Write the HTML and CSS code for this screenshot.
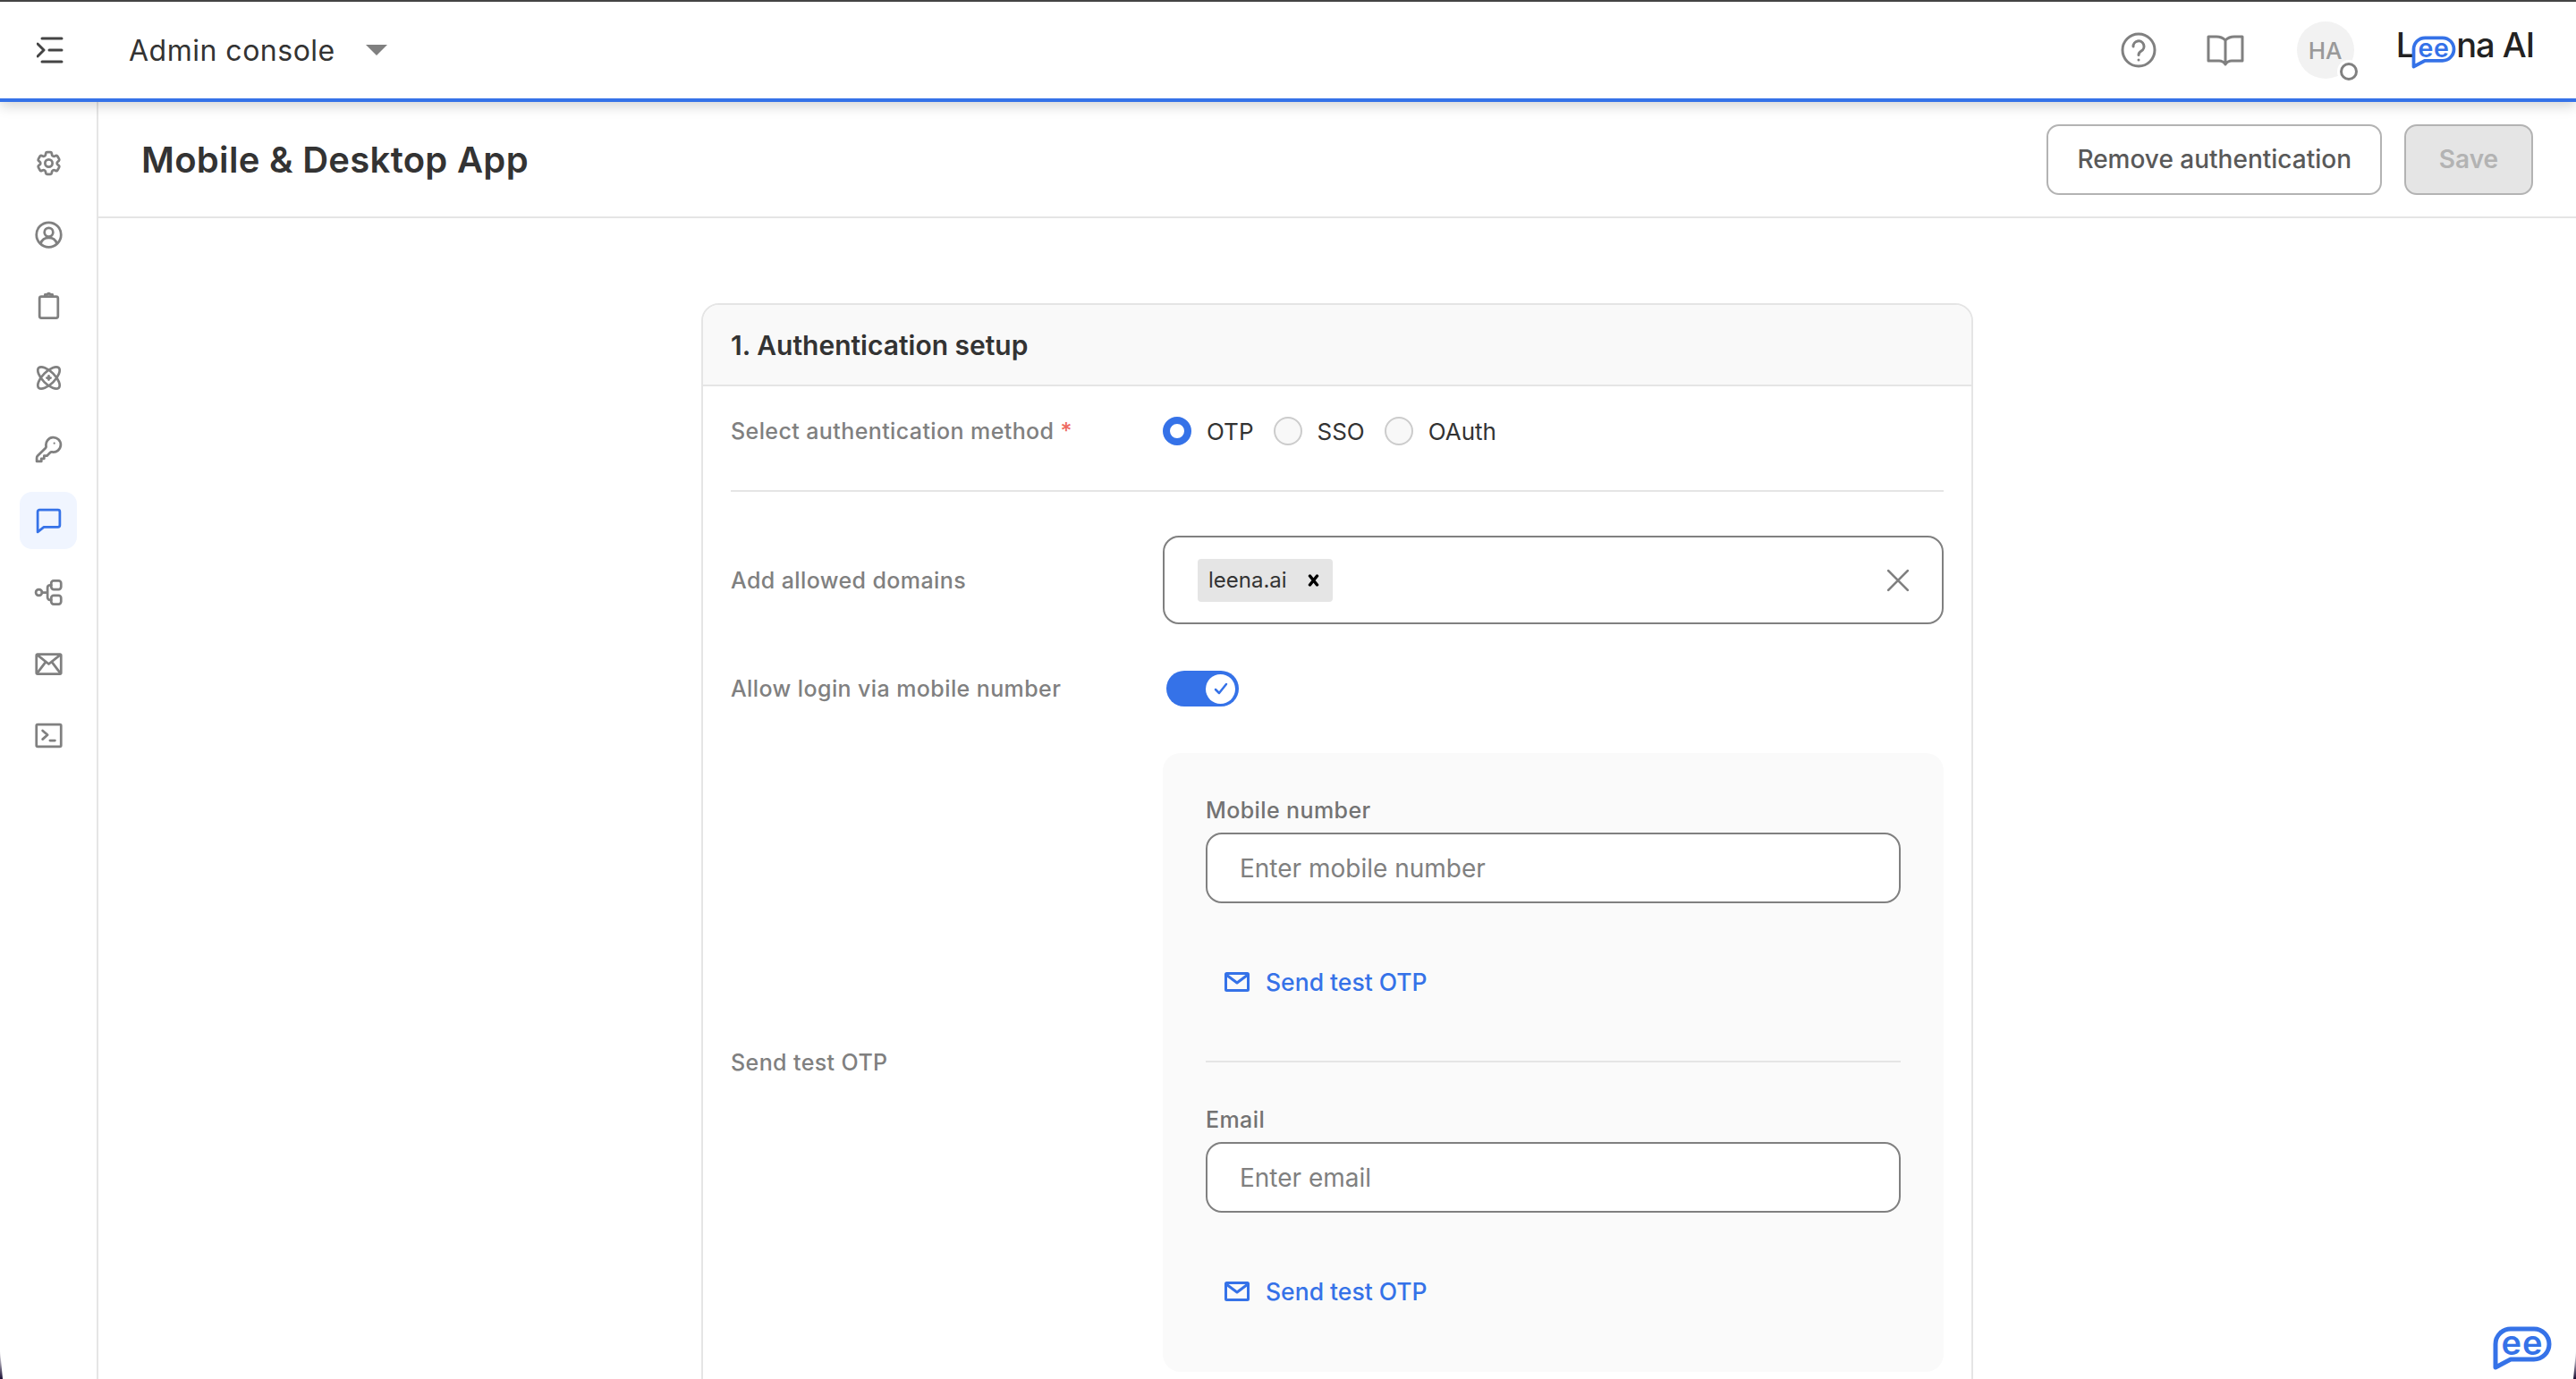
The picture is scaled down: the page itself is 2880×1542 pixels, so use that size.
FILE: index.html
```html
<!DOCTYPE html>
<html lang="en">
<head>
    <meta charset="UTF-8">
    <meta name="viewport" content="width=device-width, initial-scale=1.0">
    <title>Mobile &amp; Desktop App</title>
    <link rel="stylesheet" href="styles.css">
</head>
<body>
    <div class="app">
        <header class="topbar">
            <svg class="menu-icon" viewBox="0 0 30 30"><path d="M6 2h22M14 15h14M6 28h22M1 8l7 7-7 7"/></svg>
            <span class="console-name">Admin console</span>
            <span class="caret"></span>
            <div class="topbar-right">
                <svg class="help-icon" viewBox="0 0 40 40"><circle cx="20" cy="20" r="18"/><path d="M14 16a6 6 0 1 1 9 5c-2 1.200-3 2.200-3 4.500"/><circle class="dot" cx="20" cy="31" r="1.500"/></svg>
                <svg class="book-icon" viewBox="0 0 42 36"><path d="M21 7c-3-3-6-4-10-4H2v27h12c3 0 5 1 7 4 2-3 4-4 7-4h12V3h-9c-4 0-7 1-10 4zM21 7v27"/></svg>
                <div class="avatar">HA<span class="status"></span></div>
                <div class="logo">
                    <span>L</span>
                    <svg class="bubble logo-bubble" viewBox="-4 -8 74 64"><path d="M3 46V20A17 17 0 0 1 20 3h26a17 17 0 0 1 0 34H20z"/><text x="33" y="31.500" text-anchor="middle">ee</text></svg>
                    <span>na AI</span>
                </div>
            </div>
        </header>

        <div class="main">
            <nav class="sidebar">
                <a class="nav-item"><svg viewBox="0 0 24 24"><path d="M9.594 3.940c.09-.542.56-.94 1.110-.94h2.593c.55 0 1.020.398 1.110.94l.213 1.281c.063.374.313.686.645.87.074.04.147.083.22.127.325.196.72.257 1.075.124l1.217-.456a1.125 1.125 0 0 1 1.370.49l1.296 2.247a1.125 1.125 0 0 1-.26 1.431l-1.003.827c-.293.241-.438.613-.43.992a7.723 7.723 0 0 1 0 .255c-.008.378.137.75.43.991l1.004.827c.424.35.534.955.26 1.430l-1.298 2.247a1.125 1.125 0 0 1-1.369.491l-1.217-.456c-.355-.133-.75-.072-1.076.124a6.470 6.470 0 0 1-.22.128c-.331.183-.581.495-.644.869l-.213 1.281c-.09.543-.56.94-1.110.94h-2.594c-.55 0-1.019-.398-1.110-.94l-.213-1.281c-.062-.374-.312-.686-.644-.87a6.520 6.520 0 0 1-.22-.127c-.325-.196-.72-.257-1.076-.124l-1.217.456a1.125 1.125 0 0 1-1.369-.49l-1.297-2.247a1.125 1.125 0 0 1 .26-1.431l1.004-.827c.292-.24.437-.613.43-.991a6.932 6.932 0 0 1 0-.255c.007-.38-.138-.751-.43-.992l-1.004-.827a1.125 1.125 0 0 1-.26-1.430l1.297-2.247a1.125 1.125 0 0 1 1.370-.491l1.216.456c.356.133.751.072 1.076-.124.072-.044.146-.086.22-.128.332-.183.582-.495.644-.869l.214-1.280ZM15 12a3 3 0 1 1-6 0 3 3 0 0 1 6 0Z"/></svg></a>
                <a class="nav-item"><svg viewBox="0 0 24 24"><circle cx="12" cy="12" r="10"/><circle cx="12" cy="10" r="3.500"/><path d="M5.500 19c1-3 3.500-4.500 6.500-4.500s5.500 1.500 6.500 4.500"/></svg></a>
                <a class="nav-item"><svg viewBox="0 0 24 24"><rect x="4.500" y="4" width="15" height="17.500" rx="1.500"/><path d="M9 4V2.500h2a1 1 0 0 1 2 0h2V4"/></svg></a>
                <a class="nav-item"><svg viewBox="0 0 24 24"><ellipse cx="12" cy="12" rx="11.500" ry="5" transform="rotate(45 12 12)"/><ellipse cx="12" cy="12" rx="11.500" ry="5" transform="rotate(-45 12 12)"/><path d="M10.500 12h3M12 10.500v3"/></svg></a>
                <a class="nav-item"><svg viewBox="0 0 24 24"><path d="M21.750 8.250a6 6 0 0 1-7.029 5.912c-.563-.097-1.159.026-1.563.43L10.500 17.250H8.250v2.250H6v2.250H2.250v-2.818c0-.597.237-1.170.659-1.591l6.499-6.499c.404-.404.527-1 .43-1.563A6 6 0 1 1 21.750 8.250Z"/><circle class="dot" cx="16.500" cy="7" r=".8"/></svg></a>
                <a class="nav-item active"><svg viewBox="0 0 24 24"><path d="M3 4.500A1.500 1.500 0 0 1 4.500 3h15A1.500 1.500 0 0 1 21 4.500v11a1.500 1.500 0 0 1-1.500 1.500H8l-5 4z"/></svg></a>
                <a class="nav-item"><svg viewBox="0 0 24 24"><circle cx="4" cy="12" r="2.500"/><rect x="14" y="2.500" width="8" height="7" rx="2"/><rect x="14" y="14.500" width="8" height="7" rx="2"/><path d="M6.500 12H11M14 6h-1a2 2 0 0 0-2 2v8a2 2 0 0 0 2 2h1"/></svg></a>
                <a class="nav-item"><svg viewBox="0 0 24 24"><rect x="2" y="4" width="20" height="16" rx="1"/><path d="M2.500 4.500 12 12l9.500-7.500M2.500 19.500 9 11M21.500 19.500 15 11"/></svg></a>
                <a class="nav-item"><svg viewBox="0 0 24 24"><rect x="2" y="3" width="20" height="18" rx="1"/><path d="m7 8 4 3.500L7 15M13 16h4"/></svg></a>
            </nav>

            <div class="content">
                <div class="page-head">
                    <h1>Mobile &amp; Desktop App</h1>
                    <div class="page-actions">
                        <button class="btn">Remove authentication</button>
                        <button class="btn btn-disabled">Save</button>
                    </div>
                </div>

                <div class="page-body">
                    <section class="card">
                        <h2 class="card-title">1. Authentication setup</h2>
                        <div class="card-body">
                            <div class="form-row method-row">
                                <label class="field-label">Select authentication method <span class="required">*</span></label>
                                <div class="radio-group">
                                    <span class="radio checked"></span><span class="radio-text">OTP</span>
                                    <span class="radio"></span><span class="radio-text">SSO</span>
                                    <span class="radio"></span><span class="radio-text">OAuth</span>
                                </div>
                            </div>

                            <div class="form-row">
                                <label class="field-label">Add allowed domains</label>
                                <div class="tag-input">
                                    <span class="tag">leena.ai
                                        <svg class="tag-close" viewBox="0 0 12 14"><path d="m2 2 8 10M10 2 2 12"/></svg>
                                    </span>
                                    <svg class="clear-icon" viewBox="0 0 24 24"><path d="m2 2 20 20M22 2 2 22"/></svg>
                                </div>
                            </div>

                            <div class="form-row">
                                <label class="field-label">Allow login via mobile number</label>
                                <div class="toggle">
                                    <span class="toggle-knob"><svg viewBox="0 0 20 20"><path d="m4 11 4 4 8-10"/></svg></span>
                                </div>
                            </div>

                            <div class="form-row">
                                <label class="field-label">Send test OTP</label>
                                <div class="test-panel">
                                    <div class="test-group">
                                        <label class="test-label">Mobile number</label>
                                        <input class="text-input" type="text" placeholder="Enter mobile number">
                                        <a class="send-link">
                                            <svg viewBox="0 0 28 22"><rect x="1.500" y="1.500" width="25" height="19" rx="1"/><path d="m2 3 12 9 12-9"/></svg>
                                            Send test OTP
                                        </a>
                                    </div>
                                    <div class="test-group">
                                        <label class="test-label">Email</label>
                                        <input class="text-input" type="text" placeholder="Enter email">
                                        <a class="send-link">
                                            <svg viewBox="0 0 28 22"><rect x="1.500" y="1.500" width="25" height="19" rx="1"/><path d="m2 3 12 9 12-9"/></svg>
                                            Send test OTP
                                        </a>
                                    </div>
                                </div>
                            </div>
                        </div>
                    </section>
                </div>
            </div>
        </div>

        <svg class="bubble chat-fab" viewBox="-4 -8 74 64"><path d="M3 46V20A17 17 0 0 1 20 3h26a17 17 0 0 1 0 34H20z"/><text x="33" y="31.500" text-anchor="middle">ee</text></svg>
        <span class="corner corner-left"></span>
        <span class="corner corner-right"></span>
    </div>
</body>
</html>
```

FILE: styles.css
```css
* {
    box-sizing: border-box;
}
html, body {
    margin: 0;
    height: 100%;
    overflow: hidden;
}
body {
    font-family: Inter, "Noto Sans", sans-serif;
    color: #333;
    background: #fff;
}
svg {
    fill: none;
    stroke: #808080;
    stroke-linecap: round;
    stroke-linejoin: round;
    flex: none;
}
svg .dot {
    fill: #808080;
    stroke: none;
}
.app {
    position: relative;
    display: flex;
    flex-direction: column;
    height: 100vh;
}

/* top bar */
.topbar {
    position: relative;
    z-index: 2;
    display: flex;
    align-items: center;
    flex: none;
    height: 114px;
    padding: 0 47px 0 41px;
    background: #fff;
    border-top: 2px solid #444;
    border-bottom: 4px solid #3572e8;
    box-shadow: 0 4px 14px rgba(0, 0, 0, 0.18);
}
.menu-icon {
    width: 30px;
    height: 30px;
    stroke: #444;
    stroke-width: 3;
}
.console-name {
    margin-left: 73px;
    font-size: 32px;
    letter-spacing: 0.5px;
    color: #333;
}
.caret {
    margin-left: 34px;
    width: 0;
    height: 0;
    border-left: 12px solid transparent;
    border-right: 12px solid transparent;
    border-top: 12px solid #808080;
}
.topbar-right {
    display: flex;
    align-items: center;
    gap: 56px;
    margin-left: auto;
}
.help-icon {
    width: 40px;
    height: 40px;
    stroke-width: 3;
}
.book-icon {
    width: 42px;
    height: 36px;
    margin-right: 3px;
    stroke-width: 3;
}
.avatar {
    position: relative;
    display: flex;
    align-items: center;
    justify-content: center;
    width: 64px;
    height: 64px;
    border-radius: 50%;
    background: #f2f2f2;
    color: #999;
    font-size: 26px;
    font-weight: 500;
}
.status {
    position: absolute;
    right: -4px;
    bottom: -2px;
    width: 20px;
    height: 20px;
    border-radius: 50%;
    background: #fff;
    border: 3px solid #808080;
    box-shadow: 0 0 0 3px #fff;
}
.logo {
    display: flex;
    align-items: center;
    margin: -12px 0 0 -9px;
    font-size: 38px;
    font-weight: 500;
    line-height: 1;
    letter-spacing: -1px;
    color: #222;
}
.bubble path {
    stroke: #3572e8;
    stroke-width: 5;
}
.bubble text {
    fill: #3572e8;
    stroke: none;
    font-size: 38px;
    font-weight: 600;
    letter-spacing: 1px;
}
.logo-bubble {
    width: 56px;
    height: 48px;
    margin: 15px -3px 0 -6px;
}

/* sidebar */
.main {
    display: flex;
    flex: 1;
    min-height: 0;
}
.sidebar {
    display: flex;
    flex-direction: column;
    align-items: center;
    flex: none;
    gap: 16px;
    width: 110px;
    padding: 36px 0 0 0;
    border-right: 2px solid #e5e5e5;
}
.nav-item {
    display: flex;
    align-items: center;
    justify-content: center;
    width: 64px;
    height: 64px;
    border-radius: 14px;
}
.nav-item svg {
    width: 33px;
    height: 33px;
    stroke-width: 2;
}
.nav-item.active {
    background: #f0f5ff;
}
.nav-item.active svg {
    stroke: #3572e8;
}

/* page head */
.content {
    display: flex;
    flex-direction: column;
    flex: 1;
    min-width: 0;
}
.page-head {
    display: flex;
    align-items: center;
    justify-content: space-between;
    flex: none;
    height: 130px;
    padding: 0 48px;
    border-bottom: 2px solid #e5e5e5;
}
.page-head h1 {
    margin: 0;
    font-size: 40px;
    font-weight: 600;
    letter-spacing: 0.3px;
    color: #333;
}
.page-actions {
    display: flex;
    gap: 25px;
}
.btn {
    height: 79px;
    padding: 0 32px;
    border: 2px solid #b3b3b3;
    border-radius: 14px;
    background: #fff;
    color: #595959;
    font-family: inherit;
    font-size: 28px;
    font-weight: 500;
}
.btn-disabled {
    width: 144px;
    padding: 0;
    background: #e5e5e5;
    color: #b3b3b3;
    font-weight: 600;
}

/* card */
.page-body {
    flex: 1;
    min-height: 0;
    overflow: hidden;
    padding-top: 95px;
}
.card {
    width: 1422px;
    margin: 0 auto;
    border: 2px solid #e5e5e5;
    border-radius: 20px 20px 0 0;
}
.card-title {
    display: flex;
    align-items: center;
    height: 91px;
    margin: 0;
    padding: 0 31px;
    background: #f9f9f9;
    border-bottom: 2px solid #e5e5e5;
    border-radius: 18px 18px 0 0;
    font-size: 30px;
    font-weight: 600;
    color: #333;
}
.card-body {
    display: flex;
    flex-direction: column;
    gap: 52px;
    padding: 34px 31px 60px;
}
.form-row {
    display: grid;
    grid-template-columns: 483px 1fr;
    align-items: center;
}
.field-label {
    font-size: 25px;
    letter-spacing: 0.4px;
    color: #808080;
    font-weight: 500;
}
.required {
    color: #ee6a5f;
}
.method-row {
    padding-bottom: 50px;
    border-bottom: 2px solid #e5e5e5;
    margin-bottom: -3px;
}

/* radios */
.radio-group {
    display: flex;
    align-items: center;
}
.radio {
    width: 32px;
    height: 32px;
    border-radius: 50%;
    border: 2px solid #ccc;
    background: #f8f8f8;
}
.radio.checked {
    border: 8px solid #3572e8;
    background: #fff;
}
.radio-text {
    margin: 0 22px 0 17px;
    font-size: 26px;
    color: #333;
}

/* tag field */
.tag-input {
    display: flex;
    align-items: center;
    justify-content: space-between;
    height: 99px;
    padding: 0 36px 0 37px;
    border: 2px solid #808080;
    border-radius: 18px;
}
.tag {
    display: flex;
    align-items: center;
    gap: 23px;
    height: 48px;
    padding: 0 15px 0 12px;
    border-radius: 4px;
    background: #e5e5e5;
    font-size: 24px;
    color: #333;
}
.tag-close {
    width: 13px;
    height: 14px;
    stroke: #000;
    stroke-width: 3.500;
}
.clear-icon {
    width: 26px;
    height: 26px;
    stroke-width: 2.500;
}

/* toggle */
.toggle {
    display: flex;
    align-items: center;
    justify-content: flex-end;
    width: 81px;
    height: 40px;
    margin-left: 4px;
    padding-right: 4px;
    border-radius: 20px;
    background: #3572e8;
}
.toggle-knob {
    display: flex;
    align-items: center;
    justify-content: center;
    width: 33px;
    height: 33px;
    border-radius: 50%;
    background: #fff;
}
.toggle-knob svg {
    width: 20px;
    height: 20px;
    stroke: #3572e8;
    stroke-width: 2.500;
}

/* test otp panel */
.test-panel {
    display: flex;
    flex-direction: column;
    padding: 46px 48px 48px;
    border-radius: 20px;
    background: #fafafa;
}
.test-group {
    display: flex;
    flex-direction: column;
    padding-bottom: 68px;
}
.test-group + .test-group {
    padding-top: 46px;
    border-top: 2px solid #e5e5e5;
}
.test-group:last-child {
    padding-bottom: 22px;
}
.test-label {
    margin-bottom: 7px;
    font-size: 25px;
    line-height: 36px;
    letter-spacing: 0.4px;
    color: #737373;
    font-weight: 500;
}
.text-input {
    height: 79px;
    padding: 0 36px;
    border: 2px solid #808080;
    border-radius: 18px;
    background: #fff;
    font-family: inherit;
    font-size: 28px;
    color: #333;
}
.text-input::placeholder {
    color: #808080;
    opacity: 1;
}
.send-link {
    display: flex;
    align-items: center;
    gap: 18px;
    height: 40px;
    margin: 68px 0 0 21px;
    color: #3572e8;
    font-size: 26.500px;
    font-weight: 500;
}
.send-link svg {
    width: 28px;
    height: 22px;
    stroke: #3572e8;
    stroke-width: 3;
}

/* things lying over the page */
.chat-fab {
    position: absolute;
    right: 23px;
    bottom: 3px;
    width: 74px;
    height: 64px;
}
.corner {
    position: absolute;
    bottom: 0;
    width: 3px;
    height: 32px;
    background: linear-gradient(transparent, #1b1035);
}
.corner-left {
    left: 0;
    clip-path: polygon(0 0, 100% 100%, 0 100%);
}
.corner-right {
    right: 0;
    clip-path: polygon(100% 0, 100% 100%, 0 100%);
}
```
